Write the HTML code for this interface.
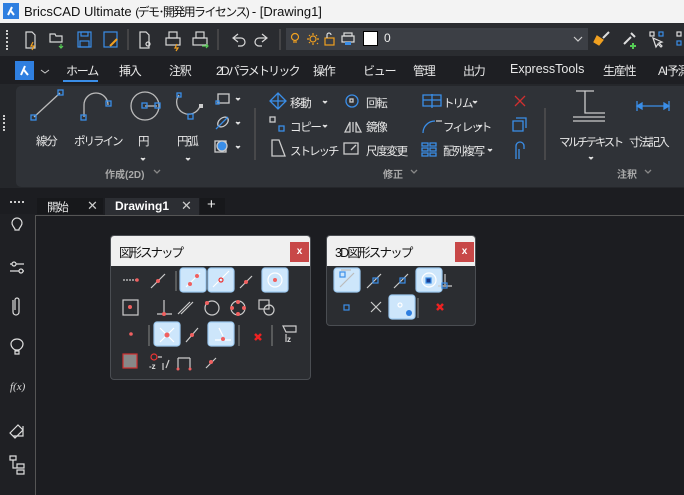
<!DOCTYPE html>
<html><head><meta charset="utf-8"><style>
*{margin:0;padding:0;box-sizing:border-box}
body{width:684px;height:495px;overflow:hidden;background:#1c1d21;font-family:"Liberation Sans","Noto Sans CJK JP",sans-serif;position:relative;color:#e8e8e8}
.a{position:absolute}
.t{font-size:11.5px;white-space:nowrap;letter-spacing:-1.3px}
.tb{font-size:12px;letter-spacing:-1.2px}
svg{position:absolute;overflow:visible}
</style></head><body>
<!-- title bar -->
<div class="a" style="left:0;top:0;width:684px;height:23px;background:#f3f3f3"></div>
<div class="a" style="left:3px;top:3px;width:16px;height:16px;background:#2f7fe0"></div>
<svg style="left:3px;top:3px" width="16" height="16"><path d="M5 12 L9 4 M8 8 L11 12" stroke="#fff" stroke-width="2" fill="none"/></svg>
<div class="a" style="left:24px;top:3px;color:#111;font-size:13px;white-space:nowrap">BricsCAD Ultimate <span style="font-size:12px;letter-spacing:-1.6px">(デモ･開発用ライセンス)</span> - [Drawing1]</div>
<!-- toolbar -->
<div class="a" style="left:0;top:23px;width:684px;height:33px;background:#2a2c30"></div>
<div class="a" style="left:6px;top:30px;width:2px;height:20px;border-left:2px dotted #ccc"></div>
<svg style="left:0;top:0" width="684" height="56" fill="none" stroke="#d8d8d8" stroke-width="1.2">
<path d="M26 32h6l3 3v13h-9z"/><path d="M33 42l-2 4h3l-2 4" stroke="#f0a020"/>
<path d="M50 34h5l1 2h6v6h-12z"/><path d="M61 44v4m-2-2l2 2 2-2" stroke="#5c5"/>
<rect x="78" y="32" width="13" height="15" stroke="#3a8ee8"/><rect x="81" y="32" width="7" height="4" stroke="#3a8ee8"/><rect x="80" y="41" width="9" height="6" stroke="#3a8ee8"/>
<rect x="104" y="32" width="13" height="15" stroke="#3a8ee8"/><path d="M110 46l7-7" stroke="#f0a020" stroke-width="2"/>
<line x1="128" y1="29" x2="128" y2="50" stroke="#555"/>
<path d="M140 32h6l3 3v13h-9z"/><circle cx="148" cy="44" r="2"/>
<rect x="166" y="38" width="14" height="7"/><rect x="169" y="32" width="8" height="6"/><path d="M177 44l-2 4h3l-2 3" stroke="#f0a020"/>
<rect x="193" y="38" width="14" height="7"/><rect x="196" y="32" width="8" height="6"/><path d="M202 46h6m-2-2l2 2-2 2" stroke="#5c5"/>
<line x1="218" y1="29" x2="218" y2="50" stroke="#555"/>
<path d="M238 34l-5 4 5 4m-5-4h8a4 4 0 0 1 0 8h-3"/>
<path d="M262 34l5 4-5 4m5-4h-8a4 4 0 0 0 0 8h3"/>
<line x1="280" y1="29" x2="280" y2="50" stroke="#555"/>
</svg>
<div class="a" style="left:286px;top:28px;width:302px;height:22px;background:#3c3f45"></div>
<svg style="left:0;top:0" width="684" height="56" fill="none" stroke-width="1.2">
<circle cx="295" cy="37" r="3.5" stroke="#f0a020"/><path d="M293 42h4" stroke="#f0a020"/>
<circle cx="313" cy="39" r="3" stroke="#f0a020"/><path d="M313 33v2m0 8v2m-6-6h2m8 0h2m-10-4l1 1m8 8l-1-1m0-8l-1 1m-6 6l-1 1" stroke="#f0a020"/>
<rect x="325" y="38" width="9" height="7" stroke="#f0a020"/><path d="M327 38v-3a2 2 0 0 1 4 0" stroke="#ddd"/>
<rect x="342" y="36" width="12" height="6" stroke="#ddd"/><rect x="344" y="33" width="8" height="3" stroke="#ddd"/><rect x="345" y="42" width="6" height="3" fill="#3a8ee8" stroke="none"/>
<path d="M574 37l4 4 4-4" stroke="#ccc"/>
<path d="M597 36l6 4-4 5-5-3z" stroke="#f0a020" fill="#f0a020"/><path d="M603 38l6-6" stroke="#ddd" stroke-width="2"/>
<path d="M624 44l7-7m0-4l4 4" stroke="#ddd" stroke-width="2"/><path d="M633 43v6m-3-3h6" stroke="#5c5" stroke-width="2"/>
<rect x="650" y="32" width="4" height="4" stroke="#ddd"/><rect x="659" y="32" width="4" height="4" stroke="#3a8ee8"/><path d="M653 38l3 9 2-3 3 3 1-1-3-3 3-1z" stroke="#ddd"/>
<rect x="677" y="32" width="4" height="4" stroke="#ddd"/><rect x="677" y="41" width="4" height="4" stroke="#3a8ee8"/>
</svg>
<div class="a" style="left:363px;top:31px;width:15px;height:15px;background:#fff;border:1px solid #000"></div>
<div class="a" style="left:384px;top:31px;color:#eee;font-size:12px">0</div>
<!-- ribbon tabs -->
<div class="a" style="left:0;top:56px;width:684px;height:28px;background:#1e1f23"></div>
<div class="a" style="left:15px;top:61px;width:19px;height:19px;background:#2f7fe0"></div>
<svg style="left:15px;top:61px" width="19" height="19"><path d="M6 14 L10 5 M9 9 L13 14" stroke="#fff" stroke-width="2" fill="none"/><path d="M26 9l4 3 4-3" stroke="#ccc" fill="none"/></svg>
<div class="a t tb" style="left:66px;top:62px">ホーム</div>
<div class="a" style="left:63px;top:80px;width:35px;height:2px;background:#3a8ee8"></div>
<div class="a t tb" style="left:119px;top:62px">挿入</div>
<div class="a t tb" style="left:169px;top:62px">注釈</div>
<div class="a t tb" style="left:216px;top:62px;letter-spacing:-1.8px">2Dパラメトリック</div>
<div class="a t tb" style="left:313px;top:62px">操作</div>
<div class="a t tb" style="left:363px;top:62px">ビュー</div>
<div class="a t tb" style="left:413px;top:62px">管理</div>
<div class="a t tb" style="left:463px;top:62px">出力</div>
<div class="a t tb" style="left:510px;top:62px;letter-spacing:0;font-size:12.5px">ExpressTools</div>
<div class="a t tb" style="left:603px;top:62px">生産性</div>
<div class="a t tb" style="left:658px;top:62px">AI予測</div>
<!-- ribbon body -->
<div class="a" style="left:0;top:84px;width:684px;height:114px;background:#25272b"></div>
<div class="a" style="left:16px;top:86px;width:680px;height:101px;background:#2f3237;border-radius:5px"></div>
<div class="a" style="left:3px;top:115px;width:2px;height:16px;border-left:2px dotted #ccc"></div>
<svg style="left:0;top:0" width="684" height="200" fill="none" stroke-width="1.3">
<line x1="34" y1="117" x2="60" y2="93" stroke="#bbb"/><rect x="31" y="115" width="5" height="5" stroke="#3a8ee8"/><rect x="58" y="90" width="5" height="5" stroke="#3a8ee8"/>
<path d="M84 117v-12a12 12 0 0 1 24 0" stroke="#bbb"/><rect x="81" y="115" width="5" height="5" stroke="#3a8ee8"/><rect x="106" y="101" width="5" height="5" stroke="#3a8ee8"/>
<circle cx="145" cy="106" r="14" stroke="#bbb"/><path d="M145 106h12" stroke="#bbb"/><rect x="142" y="103" width="5" height="5" stroke="#3a8ee8"/><rect x="155" y="103" width="5" height="5" stroke="#3a8ee8"/>
<path d="M179 95a12 12 0 1 0 21 11" stroke="#bbb"/><rect x="177" y="93" width="4" height="4" stroke="#3a8ee8"/><rect x="188" y="114" width="5" height="5" stroke="#3a8ee8"/><rect x="199" y="104" width="4" height="4" fill="#ccc" stroke="none"/>
<rect x="218" y="94" width="11" height="9" stroke="#ccc"/><rect x="216" y="101" width="3" height="3" stroke="#3a8ee8"/>
<ellipse cx="223" cy="122" rx="6" ry="4" transform="rotate(-40 223 122)" stroke="#ccc"/><path d="M216 129l12-12" stroke="#3a8ee8"/>
<rect x="215" y="141" width="11" height="11" stroke="#ccc"/><circle cx="222" cy="146" r="5" fill="#3a8ee8" stroke="#ccc"/>
<path d="M236 98l2 2 2-2M236 122l2 2 2-2M236 146l2 2 2-2M141 158l2 2 2-2M186 158l2 2 2-2" stroke="#ddd" fill="#ddd"/>
<line x1="255" y1="108" x2="255" y2="160" stroke="#555"/>
<path d="M278 93l8 8-8 8-8-8z M278 94v14M271 101h14" stroke="#3a8ee8"/>
<rect x="270" y="117" width="5" height="5" stroke="#ccc"/><rect x="279" y="126" width="5" height="5" stroke="#3a8ee8"/>
<path d="M272 140h7l6 16h-13z" stroke="#ccc"/>
<circle cx="352" cy="101" r="6" stroke="#3a8ee8"/><rect x="350" y="99" width="3" height="3" stroke="#ccc"/>
<path d="M345 132l5-10v10zM353 122v10M356 122l5 10h-5z" stroke="#ccc"/>
<rect x="344" y="143" width="14" height="11" stroke="#ccc"/><path d="M351 150l5-5" stroke="#ccc"/>
<path d="M423 100h18M432 94v14M423 95h18v11h-18z" stroke="#3a8ee8"/>
<path d="M423 133a12 12 0 0 1 12-12" stroke="#3a8ee8"/><path d="M436 121h6" stroke="#ccc"/>
<path d="M422 143h6v3h-6zM430 143h6v3h-6zM422 148h6v3h-6zM430 148h6v3h-6zM422 153h6v3h-6zM430 153h6v3h-6z" stroke="#3a8ee8"/>
<path d="M473 101l2 2 2-2M478 125l2 2 2-2M488 149l2 2 2-2M323 101l2 2 2-2M323 125l2 2 2-2" fill="#ddd" stroke="#ddd"/>
<path d="M515 96l10 10M525 96l-10 10" stroke="#d03030"/>
<path d="M513 121h10v10h-10zM516 118h10v10" stroke="#3a8ee8"/>
<path d="M516 159v-13a4 4 0 0 1 8 0v3M519 159v-10" stroke="#3a8ee8"/>
<line x1="545" y1="108" x2="545" y2="160" stroke="#555"/>
<path d="M576 91h18M585 91v22h20M573 117h32M573 121h32" stroke="#ccc"/>
<path d="M637 106h32M637 101v10M669 101v10" stroke="#3a8ee8"/><path d="M637 106l5-3v6zM669 106l-5-3v6z" fill="#3a8ee8" stroke="#3a8ee8"/>
<path d="M589 157l2 2 2-2" fill="#ddd" stroke="#ddd"/>
<path d="M154 170l3 3 3-3M411 170l3 3 3-3M645 170l3 3 3-3" stroke="#888"/>
</svg>
<div class="a t" style="left:36px;top:133px">線分</div>
<div class="a t" style="left:74px;top:133px;letter-spacing:-2px">ポリライン</div>
<div class="a t" style="left:138px;top:133px">円</div>
<div class="a t" style="left:177px;top:133px">円弧</div>
<div class="a t" style="left:290px;top:95px">移動</div>
<div class="a t" style="left:290px;top:119px">コピー</div>
<div class="a t" style="left:290px;top:143px;letter-spacing:-2px">ストレッチ</div>
<div class="a t" style="left:366px;top:95px">回転</div>
<div class="a t" style="left:366px;top:119px">鏡像</div>
<div class="a t" style="left:366px;top:143px">尺度変更</div>
<div class="a t" style="left:443px;top:95px;letter-spacing:-2px">トリム</div>
<div class="a t" style="left:443px;top:119px;letter-spacing:-2px">フィレット</div>
<div class="a t" style="left:443px;top:143px">配列複写</div>
<div class="a t" style="left:559px;top:134px;letter-spacing:-2.5px">マルチテキスト</div>
<div class="a t" style="left:629px;top:134px;letter-spacing:-1.8px">寸法記入</div>
<div class="a" style="left:105px;top:166px;font-size:10px;color:#aaa;font-weight:bold;white-space:nowrap">作成(2D)</div>
<div class="a" style="left:383px;top:166px;font-size:10px;color:#aaa;font-weight:bold">修正</div>
<div class="a" style="left:617px;top:166px;font-size:10px;color:#aaa;font-weight:bold">注釈</div>
<!-- tabs -->
<div class="a" style="left:0;top:188px;width:684px;height:10px;background:#1c1d21"></div>
<div class="a" style="left:10px;top:201px;width:14px;height:2px;border-top:2px dotted #ccc"></div>
<div class="a" style="left:37px;top:198px;width:66px;height:16px;background:#17181b"></div>
<div class="a t" style="left:47px;top:199px">開始</div>
<div class="a" style="left:87px;top:198px;font-size:13px;color:#ccc">✕</div>
<div class="a" style="left:105px;top:198px;width:94px;height:17px;background:#2c2e33"></div>
<div class="a" style="left:115px;top:199px;font-weight:bold;color:#fff;font-size:12px">Drawing1</div>
<div class="a" style="left:181px;top:198px;font-size:13px;color:#ccc">✕</div>
<div class="a" style="left:200px;top:198px;width:25px;height:16px;background:#17181b"></div>
<div class="a" style="left:207px;top:196px;font-size:15px;color:#eee">+</div>
<!-- side -->
<div class="a" style="left:0;top:214px;width:35px;height:281px;background:#1f2024"></div>
<div class="a" style="left:35px;top:215px;width:649px;height:1px;background:#555"></div>
<div class="a" style="left:35px;top:215px;width:1px;height:280px;background:#555"></div>
<svg style="left:0;top:0" width="40" height="495" fill="none" stroke="#ddd" stroke-width="1.2">
<path d="M13 226a5 5 0 1 1 8 0l-2 3v1h-4v-1z"/>
<path d="M10 264h14M10 271h14"/><circle cx="14" cy="264" r="2" fill="#1f2024"/><circle cx="21" cy="271" r="2" fill="#1f2024"/>
<path d="M15 310v-10a2 2 0 0 1 4 0v12a3 3 0 0 1-6 0v-12"/>
<path d="M11 344a6 5 0 0 1 12 0c0 3-3 6-5 6h-2c-2 0-5-3-5-6zM15 351h4v3h-4z"/>
<text x="10" y="390" fill="#ddd" stroke="none" font-size="11" font-style="italic" font-family="Liberation Serif">f(x)</text>
<path d="M10 433l8-8 5 5-8 8zM13 436h10v-10"/>
<path d="M10 456h6v4h-6zM13 460v8h4M17 464h7v4h-7zM17 470h7v4h-7z"/>
</svg>
<!-- dialog 1 -->
<div class="a" style="left:110px;top:235px;width:201px;height:145px;background:#2b2d31;border:1px solid #4a4d52;border-radius:4px;overflow:hidden">
<div style="height:30px;background:#f0f0f0"></div></div>
<div class="a" style="left:119px;top:242px;color:#111;font-size:12.5px;letter-spacing:-2px;white-space:nowrap">図形スナップ</div>
<div class="a" style="left:290px;top:242px;width:19px;height:20px;background:#c84848;color:#fff;font-size:10px;text-align:center;line-height:20px;font-weight:bold">x</div>
<!-- dialog 2 -->
<div class="a" style="left:326px;top:235px;width:150px;height:91px;background:#2b2d31;border:1px solid #4a4d52;border-radius:4px;overflow:hidden">
<div style="height:30px;background:#f0f0f0"></div></div>
<div class="a" style="left:335px;top:242px;color:#111;font-size:12.5px;letter-spacing:-1.8px;white-space:nowrap">3D図形スナップ</div>
<div class="a" style="left:455px;top:242px;width:19px;height:20px;background:#c84848;color:#fff;font-size:10px;text-align:center;line-height:20px;font-weight:bold">x</div>
<svg style="left:0;top:0" width="684" height="495" fill="none" stroke-width="1.2">
<g fill="#cde6fb" stroke="#9cc9f0">
<rect x="180" y="268" width="26" height="24" rx="3"/><rect x="208" y="268" width="26" height="24" rx="3"/><rect x="262" y="268" width="26" height="24" rx="3"/>
<rect x="154" y="322" width="26" height="24" rx="3"/><rect x="208" y="322" width="26" height="24" rx="3"/>
<rect x="334" y="268" width="26" height="24" rx="3"/><rect x="416" y="268" width="26" height="24" rx="3"/><rect x="389" y="295" width="26" height="24" rx="3"/>
</g>
<g stroke="#ccc">
<line x1="176" y1="271" x2="176" y2="291" stroke="#777"/><line x1="149" y1="325" x2="149" y2="346" stroke="#777"/><line x1="239" y1="325" x2="239" y2="346" stroke="#777"/><line x1="272" y1="325" x2="272" y2="346" stroke="#777"/><line x1="418" y1="298" x2="418" y2="318" stroke="#777"/>
<path d="M123 280h14" stroke-dasharray="2 1"/><path d="M151 288l14-14"/>
<path d="M186 287l14-14M213 287l16-16" stroke="#fff"/><circle cx="221" cy="280" r="2" stroke="#e33"/>
<path d="M240 288l12-12"/><circle cx="275" cy="280" r="7" stroke="#fff"/>
<rect x="123" y="300" width="15" height="15"/><path d="M157 314h15M164 300v14M178 314l12-12M181 314l12-12"/>
<circle cx="212" cy="308" r="7"/><circle cx="238" cy="308" r="7"/><rect x="259" y="300" width="10" height="9"/><circle cx="269" cy="310" r="5"/>
<path d="M160 328l14 14M174 328l-14 14" stroke="#fff"/><path d="M186 342l12-14"/><path d="M215 340h16M219 328l4 8" stroke="#fff"/>
<path d="M283 326h13v6h-10zM286 334v8" /><text x="287" y="342" fill="#ddd" stroke="none" font-size="8" font-weight="bold">z</text>
<rect x="123" y="354" width="14" height="14" stroke="#d03030" fill="#888"/>
<circle cx="154" cy="357" r="3" stroke="#e33"/><path d="M158 357h4M163 363v7M166 368l3-8"/><text x="149" y="369" fill="#ddd" stroke="none" font-size="8" font-weight="bold">-z</text>
<path d="M178 358h12M178 358v12M190 358v12M206 368l10-10"/>
<path d="M341 270h10M340 287l14-14" stroke="#bbb"/>
<path d="M367 288l14-14M394 288l14-14M445 274v11M438 286h14M371 302l10 10M381 302l-10 10"/>
</g>
<g fill="#f06060" stroke="none">
<circle cx="137" cy="280" r="1.8"/><circle cx="158" cy="281" r="2"/><circle cx="190" cy="284" r="2"/><circle cx="197" cy="276" r="2"/><circle cx="246" cy="282" r="2"/><circle cx="275" cy="280" r="2"/>
<circle cx="130" cy="307" r="2"/><circle cx="164" cy="314" r="2"/><circle cx="207" cy="303" r="2"/><circle cx="232" cy="308" r="2"/><circle cx="244" cy="308" r="2"/><circle cx="238" cy="302" r="2"/><circle cx="238" cy="314" r="2"/>
<circle cx="131" cy="334" r="1.8"/><circle cx="167" cy="335" r="2.5"/><circle cx="192" cy="335" r="2"/><circle cx="223" cy="339" r="2"/><circle cx="211" cy="362" r="2"/><circle cx="178" cy="369" r="1.5"/><circle cx="190" cy="369" r="1.5"/>
</g>
<path d="M255 334l6 6M261 334l-6 6M437 304l6 6M443 304l-6 6" stroke="#e22" stroke-width="2.5"/>
<g stroke="#3a8ee8"><rect x="340" y="272" width="5" height="5"/><rect x="373" y="278" width="5" height="5"/><rect x="400" y="278" width="5" height="5"/><rect x="426" y="278" width="5" height="5" fill="#1a3a8a"/><rect x="442" y="283" width="5" height="5"/><rect x="344" y="305" width="5" height="5"/></g>
<circle cx="429" cy="280" r="7" stroke="#fff"/><circle cx="409" cy="313" r="3" fill="#2f7fe0"/><circle cx="400" cy="305" r="2" stroke="#fff"/>
</svg>
</body></html>
